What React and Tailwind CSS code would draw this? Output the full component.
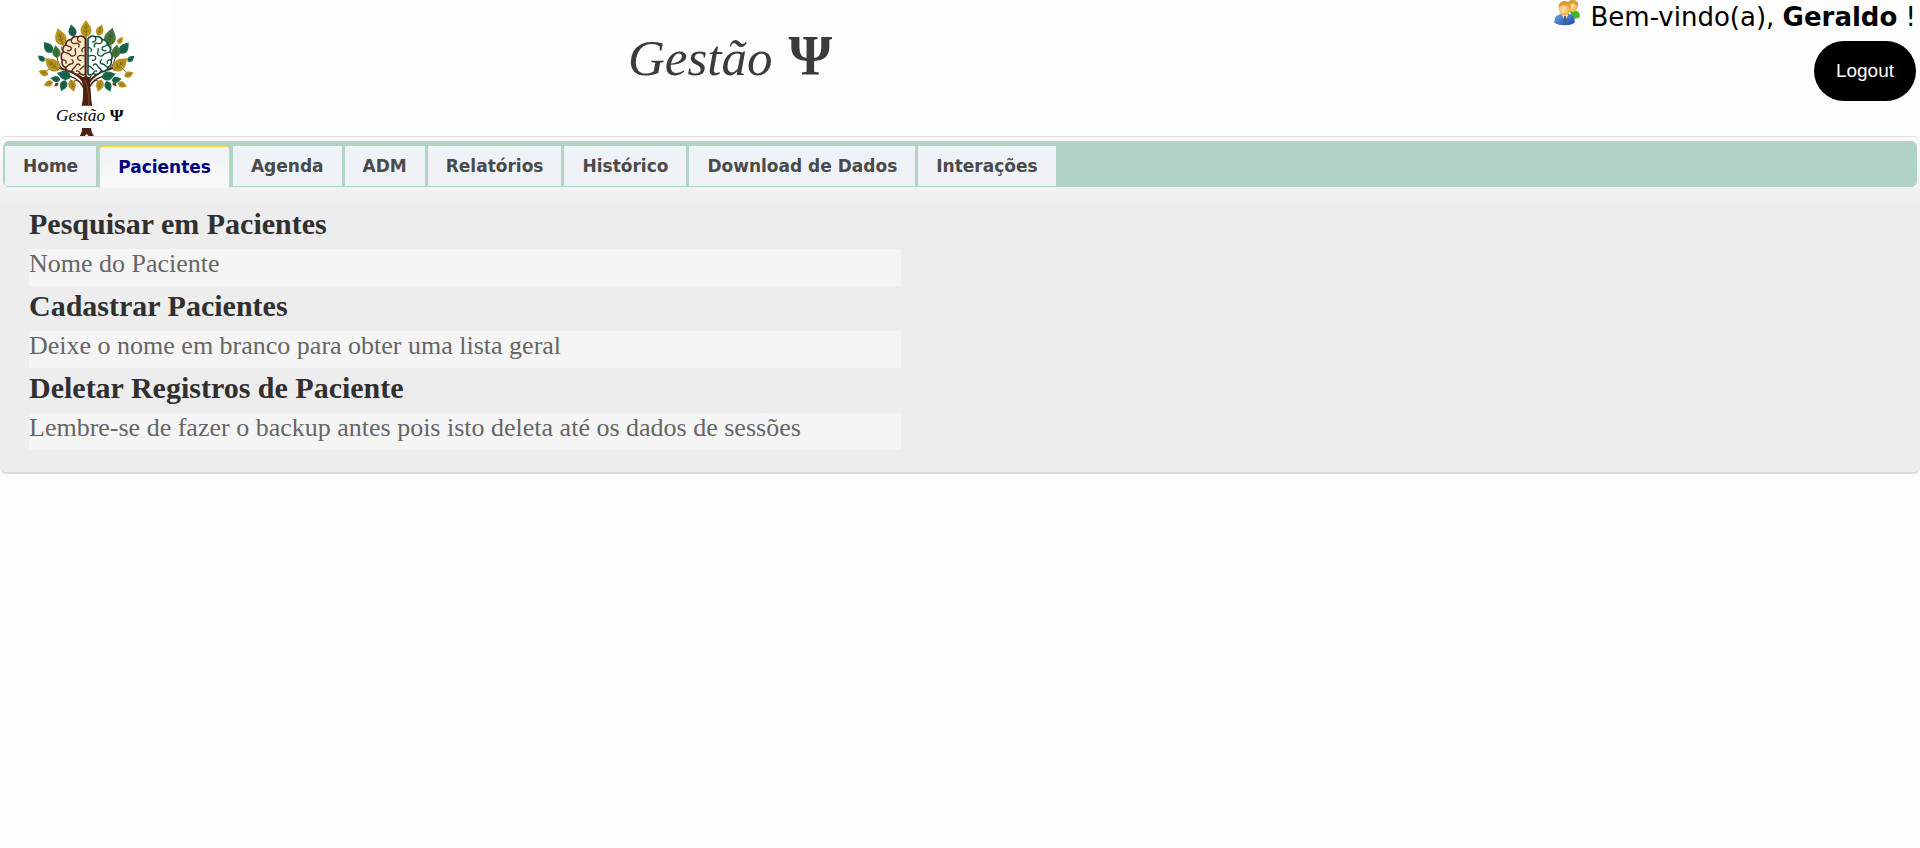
import React from 'react';

const GOLD = '#b8961c';
const TEAL = '#17684f';
const GREEN = '#43793a';

// x, y, length, tilt, colour
const leaves = [
    [258, 86, 54, 0, GOLD],
    [181, 111, 56, -18, GOLD],
    [300, 90, 37, 20, GOLD],
    [361, 121, 26, 35, GOLD],
    [156, 193, 58, -50, GOLD],
    [361, 193, 58, 50, GOLD],
    [130, 218, 32, -68, GOLD],
    [387, 223, 31, 68, GOLD],
    [145, 251, 30, -110, GOLD],
    [367, 254, 30, 110, GOLD],
    [169, 254, 16, -130, '#7a3b1c'],
    [344, 253, 16, 130, '#7a3b1c'],
    [217, 257, 39, 165, GOLD],
    [299, 257, 39, 195, GOLD],
    [217, 92, 40, -12, TEAL],
    [144, 142, 42, -38, TEAL],
    [373, 144, 44, 38, TEAL],
    [124, 175, 27, -50, TEAL],
    [393, 176, 27, 50, TEAL],
    [192, 225, 45, -75, TEAL],
    [166, 237, 31, -80, TEAL],
    [190, 257, 37, -160, TEAL],
    [326, 227, 45, 75, TEAL],
    [350, 239, 31, 80, TEAL],
    [325, 259, 35, 160, TEAL],
    [331, 111, 58, 14, GREEN],
    [169, 155, 41, -8, GREEN],
    [348, 154, 43, 8, GREEN],
];

const tabs = [
    'Home',
    'Pacientes',
    'Agenda',
    'ADM',
    'Relatórios',
    'Histórico',
    'Download de Dados',
    'Interações',
];

const sections = [
    { title: 'Pesquisar em Pacientes', text: 'Nome do Paciente' },
    { title: 'Cadastrar Pacientes', text: 'Deixe o nome em branco para obter uma lista geral' },
    {
        title: 'Deletar Registros de Paciente',
        text: 'Lembre-se de fazer o backup antes pois isto deleta até os dados de sessões',
    },
];

const Leaf = ({ x, y, length, tilt, color }) => (
    <g transform={`translate(${x} ${y}) rotate(${tilt}) scale(${length / 40})`}>
        <path
            d="M0 -20C3 -13 12 -7 12 4C12 12 6 16 0 19C-6 16 -12 12 -12 4C-12 -7 -3 -13 0 -20Z"
            fill={color}
        />
        <path
            d="M0 -10V20M0 0L4 -5M0 0L-4 -5M0 8L6 3M0 8L-6 3"
            fill="none"
            stroke="#3b2a10"
            strokeWidth="1.2"
            opacity="0.6"
        />
    </g>
);

const HALF =
    'M256 116C250 107 240 106 234 111C225 107 216 112 214 119C204 118 196 126 198 134C189 138 186 148 190 155C182 162 182 174 187 180C183 190 188 200 196 202C198 212 208 216 216 213C222 222 232 225 240 220C246 226 253 226 256 222Z';
const FOLDS =
    'M234 111C230 119 234 126 242 126M214 119C212 128 220 133 228 130C234 128 240 134 236 141M198 134C204 141 212 138 214 144C215 150 208 154 202 151M190 155C198 160 206 158 210 164C213 170 222 170 226 164C230 157 222 150 226 146M187 180C196 178 200 184 198 190M196 202C203 200 204 193 212 192C220 192 222 184 216 179M216 213C216 204 226 204 228 197C229 191 238 190 240 196M256 142C248 142 243 148 247 154M256 168C246 168 240 162 234 170C231 175 234 182 242 181M256 198C248 196 246 206 240 208M240 220C238 213 234 212 230 213';

const Logo = () => (
    <svg viewBox="0 0 519 408" className="block h-[136px] w-[173px] shrink-0 bg-white" role="img" aria-label="Gestão Ψ">
        <g fill="none" stroke="#4e2212" strokeLinecap="round">
            <path d="M256 262C250 232 222 212 165 202" strokeWidth="6" />
            <path d="M262 262C270 232 296 212 352 202" strokeWidth="6" />
            <path d="M250 262C240 240 218 228 194 226" strokeWidth="4" />
            <path d="M268 262C278 240 300 228 322 227" strokeWidth="4" />
            <path d="M244 255C238 240 228 238 219 246M274 255C280 240 290 238 298 246" strokeWidth="3" />
            <path d="M188 208C176 196 172 180 170 165M330 208C340 196 345 180 347 165" strokeWidth="3" />
            <path d="M184 140V150M333 136V148M150 205L138 214M367 205L380 218" strokeWidth="2" />
        </g>
        {leaves.map(([x, y, length, tilt, color]) => (
            <Leaf key={`${x}-${y}`} x={x} y={y} length={length} tilt={tilt} color={color} />
        ))}
        <g strokeWidth="5" strokeLinejoin="round" strokeLinecap="round">
            <g stroke="#5c2a1b">
                <path d={HALF} fill="#fdebc8" />
                <path d={FOLDS} fill="none" strokeWidth="4" />
            </g>
            <g stroke="#124f3d" transform="translate(520 0) scale(-1 1)">
                <path d={HALF} fill="#fff" />
                <path d={FOLDS} fill="none" strokeWidth="4" />
            </g>
        </g>
        <path
            d="M256 112H260V226C264 236 268 230 276 224C268 240 270 252 272 270C273 290 274 305 277 317H245C249 300 250 284 249 268C248 250 246 236 234 222C244 228 252 236 256 226Z"
            fill="#4e2212"
        />
        <path d="M256 240C262 262 268 285 266 317" fill="none" stroke="#8a4a26" strokeWidth="3" />
        <path d="M246 384H273C274 394 277 401 282 408H266L260 402L254 408H239C244 401 246 394 246 384Z" fill="#4e2212" />
        <text x="168" y="363" fontSize="52" fontStyle="italic" fontFamily="Liberation Serif, serif">
            Gestão
        </text>
        <text x="329" y="363" fontSize="53" fontWeight="bold" fontFamily="Liberation Serif, serif">
            Ψ
        </text>
    </svg>
);

const UsersIcon = () => (
    <svg viewBox="0 0 78 78" className="h-[26px] w-[26px] shrink-0" aria-hidden="true">
        <defs>
            <radialGradient id="face" cx="0.4" cy="0.5" r="0.6">
                <stop offset="0" stopColor="#ffe9b0" />
                <stop offset="1" stopColor="#eda63a" />
            </radialGradient>
            <linearGradient id="coat" x1="0" y1="0" x2="1" y2="1">
                <stop offset="0" stopColor="#6fa4e6" />
                <stop offset="1" stopColor="#174aa8" />
            </linearGradient>
        </defs>
        <path d="M48 34C60 28 76 32 77 42V52C72 56 62 57 54 55Z" fill="#43b52c" />
        <ellipse cx="57" cy="18" rx="14" ry="18" fill="url(#face)" />
        <path d="M40 12C42 -2 66 -6 72 10C73 16 72 20 70 22C68 12 58 8 48 12Z" fill="#d9a02c" />
        <path d="M1 68C1 50 10 43 22 42H44C56 43 63 52 62 68C50 78 14 78 1 68Z" fill="url(#coat)" />
        <path d="M23 42L33 66L43 42Z" fill="#fff" />
        <path d="M30 47H36L38 62L33 70L28 62Z" fill="#4b5874" />
        <ellipse cx="32" cy="27" rx="17" ry="20" fill="url(#face)" />
        <path d="M14 26C12 8 24 2 34 3C46 4 53 12 50 27C47 18 42 15 34 16C24 14 17 18 14 26Z" fill="#dd9c2a" />
    </svg>
);

const Header = () => (
    <header className="flex h-[136px] items-start">
        <Logo />
        <div className="flex flex-1 justify-between">
            <h1 className="ml-[455px] flex items-baseline gap-4 pt-[26px] leading-[60px] text-[#3b3b3b]">
                <span className="text-[51px] italic">Gestão</span>
                <span className="text-[56px] font-bold">Ψ</span>
            </h1>
            <div className="flex flex-col items-end gap-[7px] pr-1">
                <p className="flex items-start gap-2.5 font-['DejaVu_Sans',sans-serif] text-[26px] leading-[34px] text-black">
                    <UsersIcon />
                    <span>
                        Bem-vindo(a), <strong>Geraldo</strong> !
                    </span>
                </p>
                <button
                    type="button"
                    className="rounded-[30px] bg-black px-[22px] py-[18px] font-['Liberation_Sans',sans-serif] text-[19px] leading-6 text-white"
                >
                    Logout
                </button>
            </div>
        </div>
    </header>
);

const TabBar = () => (
    <nav className="mx-[3px] flex h-[46px] gap-[3px] rounded-md border border-[#b1d4c4] bg-[#b1d4c4] px-px pt-1 font-['DejaVu_Sans',sans-serif] text-[17px] leading-10 font-bold whitespace-nowrap text-[#4a4a4a]">
        {tabs.map((tab) => (
            <a
                key={tab}
                href="#"
                className={
                    tab === 'Pacientes'
                        ? 'h-[42px] rounded-t-sm border-x border-t border-[#fcd54a] bg-linear-to-b from-[#eff3f8] to-[#f9f9f9] px-[18px] text-[#000080]'
                        : 'h-10 bg-[#eff3f8] px-[18px]'
                }
            >
                {tab}
            </a>
        ))}
    </nav>
);

export default function App() {
    return (
        <div className="min-h-screen bg-[#fdfdfd] font-['Liberation_Serif',serif]">
            <Header />
            <main className="rounded-md border-t border-b-2 border-[#dcdfdd] bg-[#ededed] bg-linear-to-b from-[#fdfdfd] to-[#ededed] to-[72px] pt-1 pb-[22px]">
                <TabBar />
                <div className="px-[29px] pt-[17px]">
                    {sections.map((section) => (
                        <section key={section.title} className="w-full max-w-[872px]">
                            <h2 className="pb-[5px] text-[30px] leading-10 font-bold text-[#303030]">
                                {section.title}
                            </h2>
                            <p className="bg-[#f5f5f5] pb-[7px] text-[26px] leading-[30px] text-[#666]">
                                {section.text}
                            </p>
                        </section>
                    ))}
                </div>
            </main>
        </div>
    );
}
